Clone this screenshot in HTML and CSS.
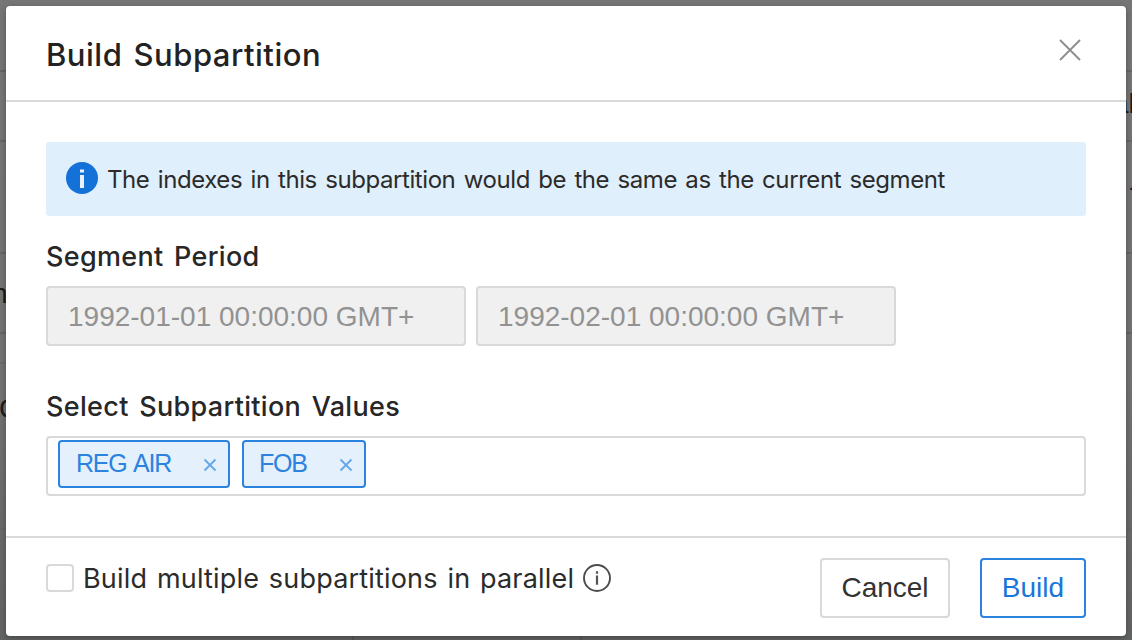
FILE: index.html
```
<!DOCTYPE html>
<html lang="en">
<head>
<meta charset="utf-8">
<title>Build Subpartition</title>
<link rel="stylesheet" href="styles.css">
</head>
<body>
<div class="backdrop">
  <i class="rule l" style="top:70px"></i><i class="rule l" style="top:140px"></i><i class="rule l" style="top:252px"></i><i class="rule l" style="top:332px"></i><i class="rule l faint" style="top:362px"></i><i class="rule l" style="top:528px"></i>
  <i class="rule r" style="top:70px"></i><i class="rule r" style="top:140px"></i><i class="rule r" style="top:252px"></i><i class="rule r" style="top:332px"></i><i class="rule r" style="top:528px"></i>
  <i class="column" style="left:352px"></i><i class="column" style="left:580px"></i>
  <span class="peek peek-n">n</span><span class="peek peek-c">C</span><span class="peek peek-a">al</span><span class="peek peek-dash">-</span>
</div>
<main class="modal">
  <header class="modal-header">
    <h1 class="title">Build Subpartition</h1>
    <svg class="close" viewBox="0 0 22 22"><path d="M1 1 21 21M21 1 1 21"/></svg>
  </header>
  <section class="modal-body">
    <div class="alert">
      <svg class="alert-icon" viewBox="0 0 32 32"><circle cx="16" cy="16" r="16" fill="#1371d8"/><path d="M14 7.5h4v3h-4zM14 13h4v13h-4z" fill="#e8f3fd"/></svg>
      <span class="alert-text">The indexes in this subpartition would be the same as the current segment</span>
    </div>
    <h2 class="label">Segment Period</h2>
    <div class="period">
      <div class="input">1992-01-01 00:00:00 GMT+</div>
      <div class="input">1992-02-01 00:00:00 GMT+</div>
    </div>
    <h2 class="label label-values">Select Subpartition Values</h2>
    <div class="select">
      <span class="tag tag-reg"><span>REG AIR</span><svg class="tag-x" viewBox="0 0 14 14"><path d="M1.5 1.5 12.5 12.5M12.5 1.5 1.5 12.5"/></svg></span>
      <span class="tag tag-fob"><span>FOB</span><svg class="tag-x" viewBox="0 0 14 14"><path d="M1.5 1.5 12.5 12.5M12.5 1.5 1.5 12.5"/></svg></span>
    </div>
  </section>
  <footer class="modal-footer">
    <label class="check"><span class="box"></span><span class="check-text">Build multiple subpartitions in parallel</span>
      <svg class="hint" viewBox="0 0 28 28"><circle cx="14" cy="14" r="13" fill="none" stroke="#4c4c4c" stroke-width="1.9"/><path d="M12.9 7.3h2.2v2.4h-2.2zM12.9 11.5h2.2v9.3h-2.2z" fill="#555"/></svg>
    </label>
    <div class="actions"><button class="btn cancel">Cancel</button><button class="btn build">Build</button></div>
  </footer>
</main>
</body>
</html>
```
FILE: styles.css
```
* { box-sizing: border-box; }
body {
  margin: 0;
  width: 1132px;
  height: 640px;
  padding: 6px;
  overflow: hidden;
  position: relative;
  font-family: "Liberation Sans", Arial, sans-serif;
  color: #2b2b2b;
  background: linear-gradient(#767676, #737373 60%, #626363);
}
.backdrop { position: absolute; inset: 0; overflow: hidden; }
.rule { position: absolute; width: 6px; height: 2px; background: #666; }
.rule.l { left: 0; }
.rule.r { right: 0; }
.faint { opacity: .5; }
.column { position: absolute; top: 636px; width: 2px; height: 4px; background: #585858; }
.peek { position: absolute; font-size: 28px; line-height: 32px; color: #1c1c1c; }
.peek-n { left: -8px; top: 278px; }
.peek-c { left: -1px; top: 393px; }
.peek-a { left: 1113px; top: 88px; }
.peek-dash { left: 1129px; top: 171px; }
.modal {
  position: relative;
  width: 1120px;
  height: 630px;
  display: flex;
  flex-direction: column;
  background: #fff;
  border-radius: 4px;
  box-shadow: 0 2px 6px rgba(0, 0, 0, .3);
}
.modal-header {
  height: 96px;
  flex: none;
  padding: 0 45px 0 40px;
  border-bottom: 2px solid #d9d9d9;
  display: flex;
  justify-content: space-between;
}
.title, .label, .alert-text, .check-text { font-family: Inter, "Liberation Sans", sans-serif; }
.title { margin: 29px 0 0; font-size: 31px; line-height: 40px; font-weight: 500; color: #222; letter-spacing: .5px; word-spacing: 2.5px; }
.close { width: 22px; height: 22px; margin-top: 33px; fill: none; stroke: #8c8c8c; stroke-width: 1.8; }
.modal-body { flex: 1; padding: 40px 40px 0; }
.alert {
  height: 74px;
  padding-left: 20px;
  display: flex;
  align-items: center;
  background: #e0effc;
  border-radius: 3px;
}
.alert-icon { width: 32px; height: 32px; margin: -2px 9px 0 0; }
.alert-text { font-size: 24px; letter-spacing: -.42px; word-spacing: 2px; white-space: nowrap; }
.label { margin: 21px 0 0; font-size: 27px; line-height: 40px; height: 40px; font-weight: 500; color: #272727; letter-spacing: .32px; word-spacing: 3px; }
.period { display: flex; gap: 10px; margin-top: 9px; }
.input {
  width: 420px;
  height: 60px;
  padding-left: 20px;
  border: 2px solid #d9d9d9;
  border-radius: 4px;
  background: #f0f0f0;
  color: #929292;
  font-size: 28px;
  line-height: 57px;
}
.label-values { margin-top: 41px; }
.select {
  height: 60px;
  margin-top: 9px;
  padding: 2px 10px;
  border: 2px solid #d9d9d9;
  border-radius: 4px;
  display: flex;
  align-items: flex-start;
  gap: 12px;
}
.tag {
  height: 48px;
  padding: 0 11px 0 16px;
  border: 2px solid #2b82df;
  border-radius: 4px;
  background: #e4f0fb;
  color: #2b82df;
  display: flex;
  align-items: center;
  justify-content: space-between;
  font-size: 25px;
  line-height: 42px;
  letter-spacing: -1.2px;
  word-spacing: 2px;
}
.tag span { margin-top: -2px; }
.tag-reg { width: 172px; }
.tag-fob { width: 124px; padding-left: 15px; }
.tag-x { width: 14px; height: 14px; margin-top: 2px; fill: none; stroke: #62a6ea; stroke-width: 1.8; }
.modal-footer {
  height: 100px;
  flex: none;
  padding: 20px 40px 0;
  border-top: 2px solid #d9d9d9;
  display: flex;
  justify-content: space-between;
  align-items: flex-start;
}
.check { display: flex; align-items: center; height: 40px; }
.box { width: 28px; height: 28px; border: 2px solid #d9d9d9; border-radius: 4px; }
.check-text { margin-left: 9px; font-size: 27px; letter-spacing: .18px; word-spacing: 2px; white-space: nowrap; }
.hint { width: 28px; height: 28px; margin-left: 9px; }
.actions { display: flex; gap: 30px; }
.btn {
  height: 60px;
  padding: 0;
  border: 2px solid #d9d9d9;
  border-radius: 4px;
  background: #fff;
  font: 28px "Liberation Sans", Arial, sans-serif;
  color: #333;
}
.cancel { width: 130px; }
.build { width: 106px; border-color: #2b82df; color: #1976db; }
```
